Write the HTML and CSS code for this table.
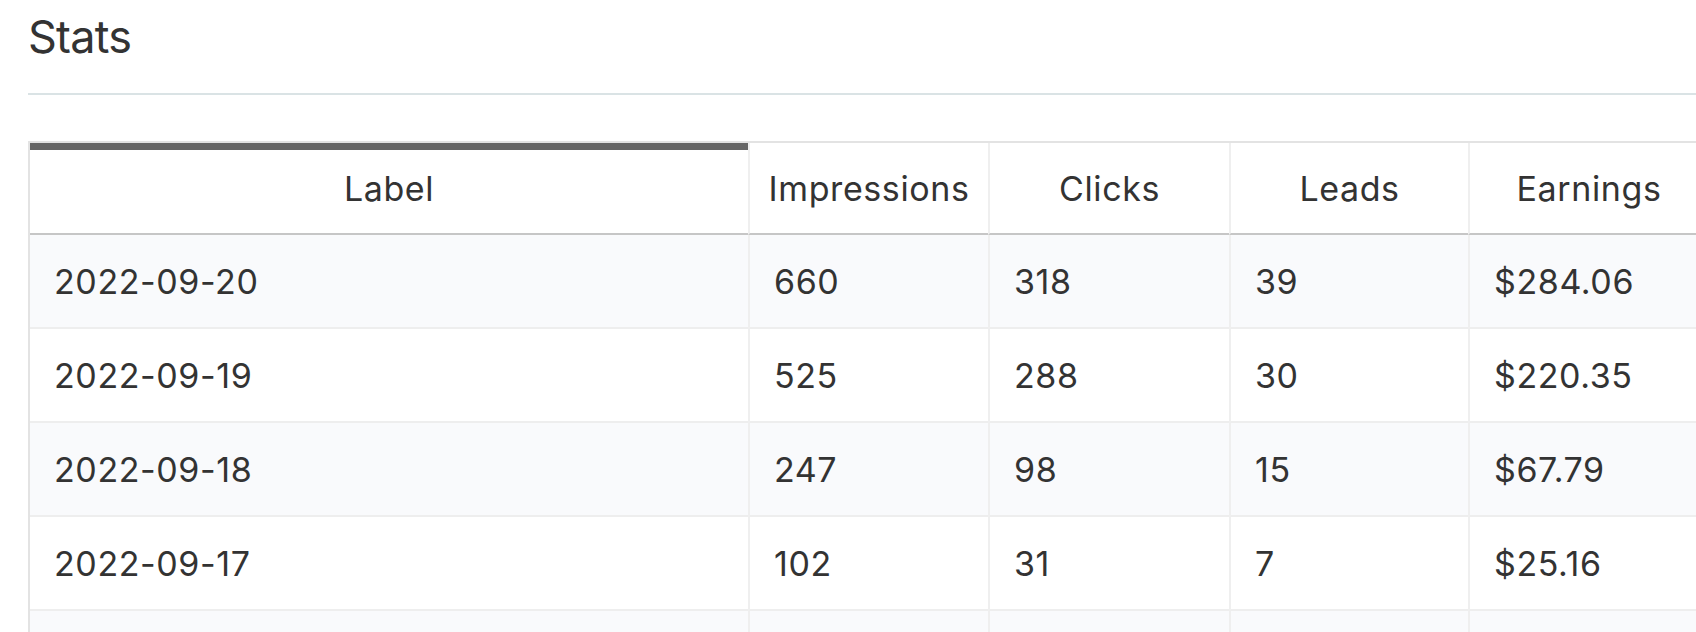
FILE: index.html
```html
<!DOCTYPE html>
<html lang="en">
<head>
<meta charset="utf-8">
<title>Stats</title>
<link rel="stylesheet" href="styles.css">
</head>
<body>
<div class="page">
  <div class="page-header">
    <h1 class="title">Stats</h1>
  </div>
  <div class="table-wrap">
    <table class="stats">
      <thead>
        <tr>
          <th class="col-label sorted">Label</th>
          <th class="col-imp">Impressions</th>
          <th class="col-clicks">Clicks</th>
          <th class="col-leads">Leads</th>
          <th class="col-earn">Earnings</th>
        </tr>
      </thead>
      <tbody>
        <tr><td>2022-09-20</td><td>660</td><td>318</td><td>39</td><td>$284.06</td></tr>
        <tr><td>2022-09-19</td><td>525</td><td>288</td><td>30</td><td>$220.35</td></tr>
        <tr><td>2022-09-18</td><td>247</td><td>98</td><td>15</td><td>$67.79</td></tr>
        <tr><td>2022-09-17</td><td>102</td><td>31</td><td>7</td><td>$25.16</td></tr>
        <tr class="row-more"><td></td><td></td><td></td><td></td><td></td></tr>
      </tbody>
    </table>
  </div>
</div>
</body>
</html>
```
FILE: styles.css
```css
html, body {
  margin: 0;
  padding: 0;
  overflow: hidden;
  background: #ffffff;
}

body {
  font-family: Inter, "Liberation Sans", sans-serif;
  color: #333333;
}

.page {
  padding-left: 28px;
  width: 1668px;
  overflow: hidden;
}

.page-header {
  padding-top: 14px;
  padding-bottom: 34px;
  border-bottom: 2px solid #dae3e5;
}

.title {
  margin: 0;
  font-size: 45px;
  line-height: 45px;
  font-weight: 400;
  letter-spacing: -0.8px;
  color: #333333;
}

.table-wrap {
  margin-top: 46px;
  width: 1700px;
}

.stats {
  border-collapse: separate;
  border-spacing: 0;
  table-layout: fixed;
  width: 1680px;
  border-top: 2px solid #e3e3e3;
  border-left: 2px solid #e3e3e3;
  font-size: 34px;
  letter-spacing: 0.6px;
}

.stats th,
.stats td {
  box-sizing: border-box;
  padding: 0 24px;
  border-left: 2px solid #efefef;
  white-space: nowrap;
  vertical-align: middle;
}

.stats th:first-child,
.stats td:first-child {
  border-left: none;
}

.stats th {
  height: 92px;
  font-weight: 400;
  text-align: center;
  padding: 0;
  border-bottom: 2px solid #c6c6c6;
  color: #333333;
}

.stats th.sorted {
  box-shadow: inset 0 7px 0 #666666;
}

.col-label { width: 718px; }
.col-imp { width: 240px; }
.col-clicks { width: 241px; }
.col-leads { width: 239px; }
.col-earn { width: 240px; }

.stats td {
  height: 94px;
  border-bottom: 2px solid #eeeeee;
  text-align: left;
}

.stats tbody tr:nth-child(odd) td {
  background: #f9fafc;
}

.stats tbody tr:nth-child(even) td {
  background: #ffffff;
}
```
